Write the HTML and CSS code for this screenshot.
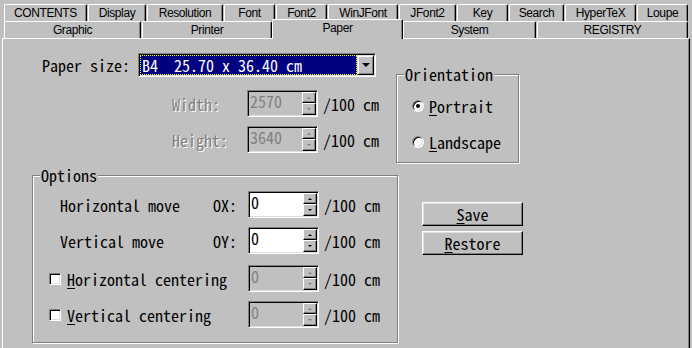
FILE: index.html
```html
<!DOCTYPE html>
<html lang="en">
<head>
    <meta charset="UTF-8">
    <title>Paper</title>
    <link rel="stylesheet" href="styles.css">
</head>
<body>
    <!-- Tabs -->
    <div class="tabs">
        <div class="tab-row back">
            <div class="tab">CONTENTS</div>
            <div class="tab">Display</div>
            <div class="tab">Resolution</div>
            <div class="tab">Font</div>
            <div class="tab">Font2</div>
            <div class="tab">WinJFont</div>
            <div class="tab">JFont2</div>
            <div class="tab">Key</div>
            <div class="tab">Search</div>
            <div class="tab">HyperTeX</div>
            <div class="tab">Loupe</div>
        </div>
        <div class="tab-row front">
            <div class="tab">Graphic</div>
            <div class="tab">Printer</div>
            <div class="tab active">Paper</div>
            <div class="tab">System</div>
            <div class="tab">REGISTRY</div>
        </div>
    </div>

    <!-- Page -->
    <div class="panel">
        <div class="top-section">
            <div class="size-col">
                <div class="field-row">
                    <span class="size-label">Paper size:</span>
                    <div class="combo">
                        <span class="combo-value">B4  25.70 x 36.40 cm</span>
                        <span class="combo-btn"></span>
                    </div>
                </div>
                <div class="field-row dim-row">
                    <span class="dim-label disabled">Width:</span>
                    <div class="spin-edit off">
                        <span class="edit-value">2570</span>
                        <span class="spinner"><span class="spin-up"></span><span class="spin-down"></span></span>
                    </div>
                    <span class="unit">/100 cm</span>
                </div>
                <div class="field-row dim-row">
                    <span class="dim-label disabled">Height:</span>
                    <div class="spin-edit off">
                        <span class="edit-value">3640</span>
                        <span class="spinner"><span class="spin-up"></span><span class="spin-down"></span></span>
                    </div>
                    <span class="unit">/100 cm</span>
                </div>
            </div>

            <div class="group orientation">
                <span class="group-title">Orientation</span>
                <div class="radio-row"><span class="radio checked"></span><span><u>P</u>ortrait</span></div>
                <div class="radio-row"><span class="radio"></span><span><u>L</u>andscape</span></div>
            </div>
        </div>

        <div class="bottom-section">
            <div class="group options">
                <span class="group-title">Options</span>
                <div class="field-row opt-row move">
                    <span class="move-label">Horizontal move</span>
                    <span class="axis">OX:</span>
                    <div class="spin-edit">
                        <span class="edit-value">0</span>
                        <span class="spinner"><span class="spin-up"></span><span class="spin-down"></span></span>
                    </div>
                    <span class="unit">/100 cm</span>
                </div>
                <div class="field-row opt-row move">
                    <span class="move-label">Vertical move</span>
                    <span class="axis">OY:</span>
                    <div class="spin-edit">
                        <span class="edit-value">0</span>
                        <span class="spinner"><span class="spin-up"></span><span class="spin-down"></span></span>
                    </div>
                    <span class="unit">/100 cm</span>
                </div>
                <div class="field-row opt-row center">
                    <span class="checkbox"></span>
                    <span class="center-label"><u>H</u>orizontal centering</span>
                    <div class="spin-edit off">
                        <span class="edit-value">0</span>
                        <span class="spinner"><span class="spin-up"></span><span class="spin-down"></span></span>
                    </div>
                    <span class="unit">/100 cm</span>
                </div>
                <div class="field-row opt-row center">
                    <span class="checkbox"></span>
                    <span class="center-label"><u>V</u>ertical centering</span>
                    <div class="spin-edit off">
                        <span class="edit-value">0</span>
                        <span class="spinner"><span class="spin-up"></span><span class="spin-down"></span></span>
                    </div>
                    <span class="unit">/100 cm</span>
                </div>
            </div>

            <div class="buttons">
                <button class="btn"><u>S</u>ave</button>
                <button class="btn"><u>R</u>estore</button>
            </div>
        </div>
    </div>
</body>
</html>
```

FILE: styles.css
```css
/* Base */
body {
    margin: 0;
    height: 348px;
    overflow: hidden;
    background-color: #c0c0c0;
    color: #000;
    font-family: "Noto Sans Mono CJK JP", "DejaVu Sans Mono", monospace;
    font-size: 16px;
    font-weight: 300;
    line-height: 16px;
}

u {
    text-decoration-thickness: 1px;
    text-underline-offset: 2px;
}

/* Tabs */
.tabs {
    padding: 4px 0 0 4px;
    font-family: "Liberation Sans", Arial, sans-serif;
    font-size: 12px;
    font-weight: normal;
    letter-spacing: -0.4px;
}

.tab-row {
    display: flex;
    height: 17px;
}

.tab {
    box-sizing: border-box;
    height: 17px;
    margin-right: 1px;
    display: flex;
    align-items: center;
    justify-content: center;
    background-color: #c0c0c0;
    border-top: 1px solid #fff;
    border-left: 1px solid #fff;
    border-right: 1px solid #000;
    border-radius: 2px 2px 0 0;
    box-shadow: inset -1px 0 0 #808080;
}

.back .tab:nth-child(1) { width: 83px; }
.back .tab:nth-child(2) { width: 58px; }
.back .tab:nth-child(3) { width: 76px; }
.back .tab:nth-child(4) { width: 51px; }
.back .tab:nth-child(5) { width: 51px; }
.back .tab:nth-child(6) { width: 70px; }
.back .tab:nth-child(7) { width: 57px; }
.back .tab:nth-child(8) { width: 51px; }
.back .tab:nth-child(9) { width: 55px; }
.back .tab:nth-child(10) { width: 71px; }
.back .tab:nth-child(11) { width: 51px; }

.front .tab:nth-child(1) { width: 137px; }
.front .tab:nth-child(2) { width: 130px; margin-right: 0; }
.front .tab:nth-child(4) { width: 133px; }
.front .tab:nth-child(5) { width: 151px; }

.tab.active {
    width: 131px;
    height: 20px;
    margin: -2px 0 -1px 0;
    padding-bottom: 3px;
    position: relative;
    z-index: 1;
}

/* Page */
.panel {
    box-sizing: border-box;
    width: 688px;
    height: 320px;
    margin-left: 2px;
    border-top: 1px solid #fff;
    border-left: 1px solid #fff;
    border-right: 1px solid #000;
    box-shadow: inset -1px 0 0 #808080;
}

.top-section,
.bottom-section {
    display: flex;
    align-items: flex-start;
}

.field-row {
    display: flex;
    align-items: center;
}

.size-col {
    width: 338px;
    margin-left: 39px;
    padding-top: 14px;
}

.size-label {
    width: 96px;
}

.dim-row {
    padding-left: 130px;
    margin-top: 13px;
}

.dim-row + .dim-row {
    margin-top: 9px;
}

.dim-label {
    width: 75px;
}

.disabled {
    color: #808080;
    text-shadow: 1px 1px 0 #fff;
}

.unit {
    margin-left: 5px;
    white-space: pre;
}

/* Combo box */
.combo {
    box-sizing: border-box;
    display: flex;
    width: 238px;
    height: 24px;
    padding: 1px;
    background-color: #fff;
    border: 1px solid;
    border-color: #808080 #fff #fff #808080;
    box-shadow: inset 1px 1px 0 #000, inset -1px -1px 0 #dfdfdf;
}

.combo-value {
    flex: 1;
    padding-left: 2px;
    line-height: 20px;
    white-space: pre;
    color: #fff;
    background-color: #000080;
    outline: 1px dotted #ffff00;
    outline-offset: -1px;
}

.combo-btn {
    box-sizing: border-box;
    width: 17px;
    display: flex;
    align-items: center;
    justify-content: center;
    background-color: #c0c0c0;
    border-top: 1px solid #dfdfdf;
    border-left: 1px solid #dfdfdf;
    border-right: 1px solid #000;
    border-bottom: 1px solid #000;
    box-shadow: inset 1px 1px 0 #fff, inset -1px -1px 0 #808080;
}

.combo-btn::after {
    content: "";
    border-left: 4px solid transparent;
    border-right: 4px solid transparent;
    border-top: 4px solid #000;
}

/* Spin edit */
.spin-edit {
    box-sizing: border-box;
    display: flex;
    width: 71px;
    height: 27px;
    padding: 1px;
    background-color: #fff;
    border: 1px solid;
    border-color: #808080 #fff #fff #808080;
    box-shadow: inset 1px 1px 0 #000, inset -1px -1px 0 #dfdfdf;
}

.spin-edit.off {
    background-color: #c0c0c0;
    color: #808080;
}

.edit-value {
    flex: 1;
    padding: 1px 0 0 1px;
}

.spinner {
    display: flex;
    flex-direction: column;
    width: 14px;
}

.spin-up,
.spin-down {
    box-sizing: border-box;
    display: flex;
    align-items: center;
    justify-content: center;
    height: 11px;
    background-color: #c0c0c0;
    border-top: 1px solid #fff;
    border-left: 1px solid #fff;
    border-right: 1px solid #000;
    border-bottom: 1px solid #000;
    box-shadow: inset -1px -1px 0 #808080;
}

.spin-down {
    height: 12px;
}

.spin-up::after {
    content: "";
    border-left: 2px solid transparent;
    border-right: 2px solid transparent;
    border-bottom: 2px solid #000;
}

.spin-down::after {
    content: "";
    border-left: 2px solid transparent;
    border-right: 2px solid transparent;
    border-top: 2px solid #000;
}

.off .spin-up::after {
    border-bottom-color: #808080;
}

.off .spin-down::after {
    border-top-color: #808080;
}

/* Group boxes */
.group {
    box-sizing: border-box;
    border: 1px solid #808080;
    box-shadow: 1px 1px 0 #fff, inset 1px 1px 0 #fff;
}

.group-title {
    display: block;
    width: max-content;
    margin: -9px 0 0 7px;
    padding: 0 1px;
    background-color: #c0c0c0;
}

.orientation {
    width: 123px;
    height: 89px;
    margin: 35px 0 0 16px;
}

.radio-row {
    display: flex;
    align-items: center;
    margin: 16px 0 0 15px;
}

.radio-row + .radio-row {
    margin-top: 20px;
}

.radio {
    box-sizing: border-box;
    position: relative;
    width: 12px;
    height: 12px;
    margin-right: 5px;
    border-radius: 50%;
    background-color: #fff;
    border: 1px solid;
    border-color: #808080 #fff #fff #808080;
    box-shadow: inset 1px 1px 0 #000, inset -1px -1px 0 #dfdfdf;
}

.radio.checked::after {
    content: "";
    position: absolute;
    left: 3px;
    top: 3px;
    width: 4px;
    height: 4px;
    border-radius: 50%;
    background-color: #000;
}

.options {
    width: 366px;
    height: 168px;
    margin: 12px 0 0 29px;
}

.opt-row {
    margin-top: 9px;
}

.opt-row.move:first-of-type {
    margin-top: 8px;
}

.opt-row.center {
    margin-top: 11px;
    margin-left: 16px;
}

.opt-row.center + .opt-row.center {
    margin-top: 9px;
}

.move {
    margin-left: 27px;
}

.move-label {
    width: 153px;
}

.axis {
    width: 35px;
}

.checkbox {
    box-sizing: border-box;
    width: 12px;
    height: 12px;
    margin-right: 6px;
    background-color: #fff;
    border: 1px solid;
    border-color: #808080 #fff #fff #808080;
    box-shadow: inset 1px 1px 0 #000, inset -1px -1px 0 #dfdfdf;
}

.center-label {
    width: 181px;
}

/* Buttons */
.buttons {
    margin: 39px 0 0 24px;
}

.btn {
    display: block;
    box-sizing: border-box;
    width: 101px;
    height: 24px;
    padding: 0;
    font: inherit;
    color: #000;
    background-color: #c0c0c0;
    border-top: 1px solid #fff;
    border-left: 1px solid #fff;
    border-right: 1px solid #000;
    border-bottom: 1px solid #000;
    box-shadow: inset -1px -1px 0 #808080, inset 1px 1px 0 #dfdfdf;
}

.btn + .btn {
    margin-top: 5px;
}
```
